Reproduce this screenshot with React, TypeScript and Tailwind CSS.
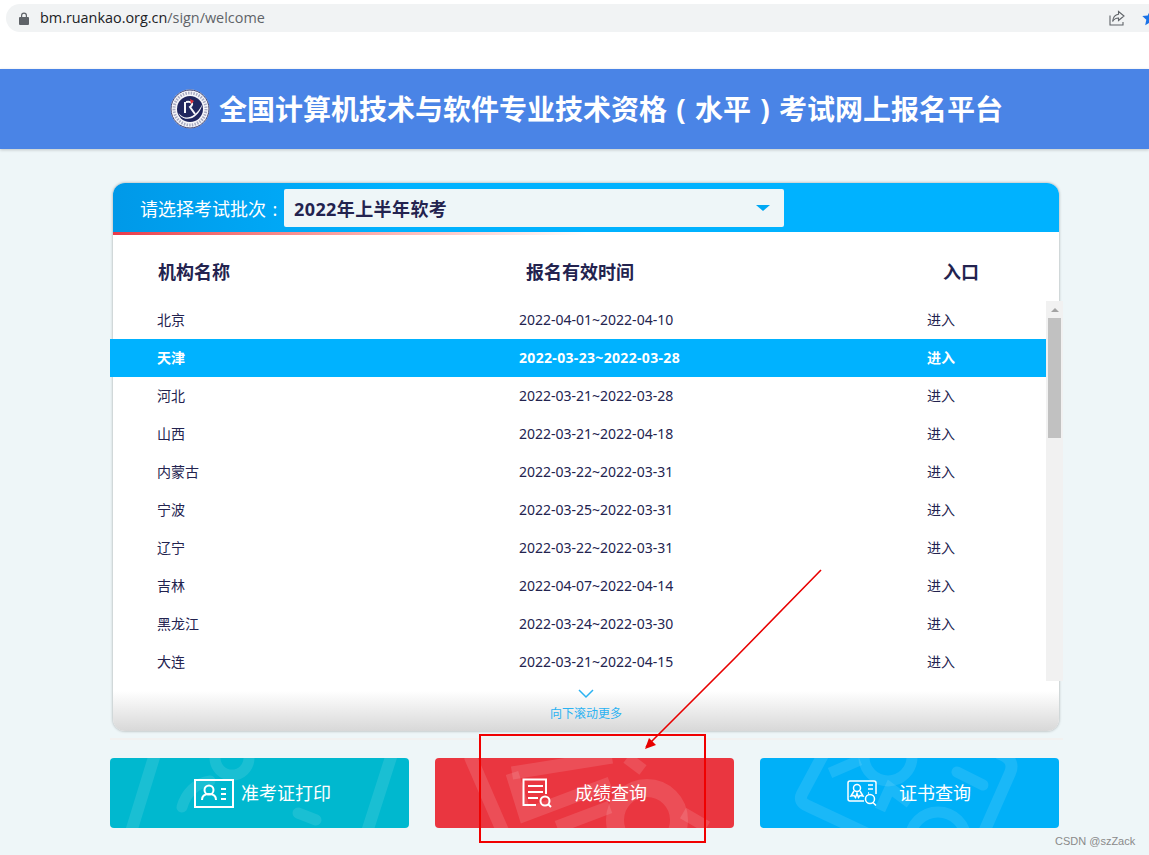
const cjk = "font-['Noto_Sans','Noto_Sans_CJK_SC',sans-serif]";

const rows = [
  ["北京", "2022-04-01~2022-04-10"],
  ["天津", "2022-03-23~2022-03-28"],
  ["河北", "2022-03-21~2022-03-28"],
  ["山西", "2022-03-21~2022-04-18"],
  ["内蒙古", "2022-03-22~2022-03-31"],
  ["宁波", "2022-03-25~2022-03-31"],
  ["辽宁", "2022-03-22~2022-03-31"],
  ["吉林", "2022-04-07~2022-04-14"],
  ["黑龙江", "2022-03-24~2022-03-30"],
  ["大连", "2022-03-21~2022-04-15"],
];

const TopBar = () => (
  <div className="h-[69px] bg-white pt-1 pl-1.5">
    <div className="h-7 rounded-l-full bg-[#f1f3f4] flex items-center">
      <svg className="ml-[13px] w-[10px] h-[13px]" viewBox="0 0 10 13" fill="#5f6368">
        <path d="M1 5h1V3.5a3 3 0 0 1 6 0V5h1a1 1 0 0 1 1 1v6a1 1 0 0 1-1 1H1a1 1 0 0 1-1-1V6a1 1 0 0 1 1-1zm2.2 0h3.6V3.5a1.8 1.8 0 0 0-3.6 0z" />
      </svg>
      <span className="ml-[11px] text-[14.4px] font-['Open_Sans',sans-serif] text-[#202124]">
        bm.ruankao.org.cn<span className="text-[#5f6368]">/sign/welcome</span>
      </span>
      <svg className="ml-auto mr-[17px] w-4 h-4" viewBox="0 0 16 16" fill="none" stroke="#5f6368" strokeWidth="1.1">
        <path d="M1 5.5V15h13v-3" />
        <path d="M9.5 1.5 15 6l-5.5 4.5V8C7 8 5 9 3.6 11.5 4 7.5 6 4.8 9.5 4.3z" />
      </svg>
      <svg className="mr-[-9px] w-4 h-4 shrink-0" viewBox="0 0 16 16" fill="#1a73e8">
        <path d="M8 0.5l2.3 5 5.4.6-4 3.7 1.1 5.4L8 12.5l-4.8 2.7 1.1-5.4-4-3.7 5.4-.6z" />
      </svg>
    </div>
  </div>
);

const Logo = () => (
  <svg className="w-10 h-10 shrink-0" viewBox="0 0 40 40">
    <circle cx="20" cy="20" r="19.5" fill="#f6f6fa" />
    <circle cx="20" cy="20" r="19" fill="none" stroke="#3a3f70" strokeWidth="1" />
    <circle cx="20" cy="20" r="16" fill="none" stroke="#a9abc2" strokeWidth="3" strokeDasharray="1.5 1.2" />
    <circle cx="20" cy="20" r="13" fill="#20265e" />
    <path d="M8.5 24c5 7 16 7 24-9-3 12-12 17-19 14-3-1-4-3-5-5z" fill="#f6f6fa" />
    <path d="M15 13v11M16 13c6-1 8 2 4 5l5 7" fill="none" stroke="#f6f6fa" strokeWidth="2" />
    <path d="M20 10l4 2-3 3z" fill="#e0303a" />
  </svg>
);

const Header = () => (
  <div className="h-20 bg-[#4a84e6] shadow-[0_1px_3px_rgba(0,0,0,0.2)] flex items-center pl-[170px] gap-[9px]">
    <Logo />
    <h1 className={`${cjk} text-[28px] font-bold text-white whitespace-nowrap`}>
      全国计算机技术与软件专业技术资格
      <span className="inline-block w-7 text-center">(</span>
      水平
      <span className="inline-block w-7 text-center">)</span>
      考试网上报名平台
    </h1>
  </div>
);

const BatchBar = () => (
  <div className="h-[52px] rounded-t-[12px] overflow-hidden flex flex-col">
    <div className="h-[49px] bg-gradient-to-r from-[#0099e8] to-[#00b2ff] to-30% flex items-center pl-[27px]">
      <span className={`${cjk} pt-1 text-[18px] text-white whitespace-nowrap`}>
        请选择考试批次<span className="inline-block w-[18px] text-center">:</span>
      </span>
      <div className="w-[500px] h-[38px] rounded-[2px] bg-[#eef6f8] flex items-center pl-2.5">
        <span className={`${cjk} pt-1 text-[18px] font-bold tracking-[0.4px] text-[#23234f]`}>2022年上半年软考</span>
        <div className="ml-auto mr-[14px] w-0 h-0 border-x-[7px] border-x-transparent border-t-[6px] border-t-[#00a8f4]" />
      </div>
    </div>
    <div className="h-[3px] bg-gradient-to-r from-[#e8394a] to-[#ffffff] to-50%" />
  </div>
);

const TableHead = () => (
  <div className={`${cjk} h-[66px] pt-2 flex items-center text-[18px] font-bold text-[#23234f] pl-[45px]`}>
    <span className="w-[368px]">机构名称</span>
    <span className="w-[417px]">报名有效时间</span>
    <span>入口</span>
  </div>
);

const TableBody = () => (
  <div className="h-[380px] flex -ml-[3px] -mr-[4px]">
    <div className="flex-1">
      {rows.map(([name, time]) => {
        const active = name === "天津";
        return (
          <div
            key={name}
            className={`${cjk} h-[38px] pb-0.5 flex items-center pl-[47px] text-[14px] ${
              active ? "bg-[#00b2ff] text-white font-bold" : "text-[#23234f]"
            }`}
          >
            <span className="w-[362px]">{name}</span>
            <span className={`w-[408px] ${active ? "tracking-[0.33px]" : ""}`}>{time}</span>
            <span>进入</span>
          </div>
        );
      })}
    </div>
    <div className="w-[17px] bg-[#f1f1f1] flex flex-col items-center">
      <div className="h-[17px] flex items-center justify-center">
        <div className="w-0 h-0 border-x-[4px] border-x-transparent border-b-[4px] border-b-[#a3a3a3]" />
      </div>
      <div className="w-[13px] h-[120px] bg-[#c1c1c1]" />
    </div>
  </div>
);

const ScrollHint = () => (
  <div className="h-[50px] rounded-b-[12px] bg-gradient-to-b from-white from-20% to-[#d8d8d8] flex flex-col items-center">
    <svg className="mt-2 w-4 h-[10px]" viewBox="0 0 16 10" fill="none" stroke="#2ab2f2" strokeWidth="1.5">
      <path d="M1 1l7 7 7-7" />
    </svg>
    <span className={`${cjk} mt-1.5 text-[12px] leading-[18px] text-[#2ab2f2]`}>向下滚动更多</span>
  </div>
);

const TicketIcon = () => (
  <svg className="w-10 h-[29px] shrink-0" viewBox="0 0 40 29" fill="none" stroke="white">
    <rect x="1" y="1" width="38" height="27" strokeWidth="2" />
    <circle cx="15" cy="11" r="4.5" strokeWidth="2" />
    <path d="M8 21c0-4 3-6 7-6s7 2 7 6" strokeWidth="2" />
    <path d="M27 10h5M27 15h5M27 20h5" strokeWidth="2" />
  </svg>
);

const ScoreIcon = () => (
  <svg className="w-[30px] h-[30px] shrink-0" viewBox="0 0 30 30" fill="none" stroke="white" strokeWidth="2">
    <path d="M14 27H1.5V1.5H24V16" />
    <path d="M6 8h15M6 14h15M6 20h10" />
    <circle cx="23" cy="23" r="4.5" />
    <path d="M26.5 26.5 29 29" />
  </svg>
);

const CertIcon = () => (
  <svg className="w-[30px] h-[26px] shrink-0" viewBox="0 0 30 26" fill="none" stroke="white" strokeWidth="1.5">
    <path d="M17 21H3a2 2 0 0 1-2-2V3a2 2 0 0 1 2-2h24a2 2 0 0 1 2 2v11" />
    <circle cx="10" cy="8" r="3.5" />
    <path d="M7 11l-3 5 3-.5 1.5 2 1.5-4 1.5 4 1.5-2 3 .5-3-5" />
    <path d="M21 5h5M21 9h5M21 13h1" />
    <circle cx="23" cy="19" r="4.5" />
    <path d="M26 22.5 29 25.5" />
  </svg>
);

type QueryButtonProps = {
  label: string;
  color: string;
  gap: string;
  pad: string;
  icon: React.ReactNode;
  art: React.ReactNode;
};

const QueryButton = ({ label, color, gap, pad, icon, art }: QueryButtonProps) => (
  <div className={`relative w-[299px] h-[70px] rounded-[4px] overflow-hidden flex items-center ${color} ${gap} ${pad}`}>
    <svg className="absolute inset-0 w-full h-full" viewBox="0 0 299 70" fill="none" stroke="white" strokeOpacity="0.1">
      {art}
    </svg>
    <div className="relative shrink-0">{icon}</div>
    <span className={`${cjk} relative text-[18px] text-white whitespace-nowrap`}>{label}</span>
  </div>
);

const ActionButtons = () => (
  <div className="mt-[18px] ml-[110px] w-[949px] flex justify-between">
    <QueryButton
      label="准考证打印"
      color="bg-[#00b8cf]"
      gap="gap-[7px]"
      pad="pl-[84px]"
      icon={<TicketIcon />}
      art={
        <>
          <path d="M45 -4 21 74M282 -4 257 74" strokeWidth="12" />
          <path d="M72 49c4-14 14-24 28-26" strokeWidth="11" strokeLinecap="round" />
          <circle cx="122" cy="0" r="17" strokeWidth="11" />
          <path d="M188 55l18 7" strokeWidth="11" strokeLinecap="round" />
        </>
      }
    />
    <QueryButton
      label="成绩查询"
      color="bg-[#ea3640]"
      gap="gap-[23px]"
      pad="pl-[87px]"
      icon={<ScoreIcon />}
      art={
        <g strokeOpacity="0.12">
          <path d="M35 -2 68 74" strokeWidth="13" />
          <path d="M77 15 177 -1" strokeWidth="13" />
          <path d="M77 15 90 57 175 25" strokeWidth="13" />
          <path d="M122 69 175 49" strokeWidth="13" />
          <path d="M192 0l16 12" strokeWidth="12" />
          <circle cx="212" cy="62" r="32" strokeWidth="18" />
          <path d="M248 55l24 14" strokeWidth="12" />
        </g>
      }
    />
    <QueryButton
      label="证书查询"
      color="bg-[#00b0f8]"
      gap="gap-[22px]"
      pad="pl-[87px]"
      icon={<CertIcon />}
      art={
        <>
          <path d="M72 -20 42 36q-4 8 6 12L112 78" strokeWidth="12" />
          <path d="M238 -5q18 6 12 20L224 74" strokeWidth="12" />
          <path d="M70 15 100 2M120 52l10-22 20 15" strokeWidth="11" />
          <circle cx="128" cy="-1" r="24" strokeWidth="11" />
          <circle cx="178" cy="82" r="28" strokeWidth="11" />
          <path d="M197 14l26 13" strokeWidth="11" strokeLinecap="round" />
        </>
      }
    />
  </div>
);

export default function App() {
  return (
    <div className="relative w-[1149px] h-[855px] overflow-hidden bg-[#eef6f8]">
      <TopBar />
      <Header />

      <div className="mt-[34px] ml-[113px] w-[946px] h-[548px] rounded-[12px] bg-white shadow-[0_0_3px_rgba(0,0,0,0.35)]">
        <BatchBar />
        <TableHead />
        <TableBody />
        <ScrollHint />
      </div>

      <div className="mt-[7px] ml-[110px] w-[953px] h-[2px] bg-[#f2f1f0]" />

      <ActionButtons />

      {/* annotation drawn on top of the screenshot */}
      <div className="absolute left-[479px] top-[734px] w-[227px] h-[109px] border-2 border-[#f00000]" />
      <svg className="absolute inset-0 w-full h-full pointer-events-none" viewBox="0 0 1149 855" fill="none">
        <path d="M821 570 735 658 646 747" stroke="#e80000" strokeWidth="1.6" />
        <path d="M645 749l4-11 7 7z" fill="#e80000" />
      </svg>

      <span className="absolute left-[1055px] top-[834px] text-[11px] leading-[14px] text-[#8a8a8a] font-['Liberation_Sans',sans-serif] whitespace-nowrap">
        CSDN @szZack
      </span>
    </div>
  );
}
